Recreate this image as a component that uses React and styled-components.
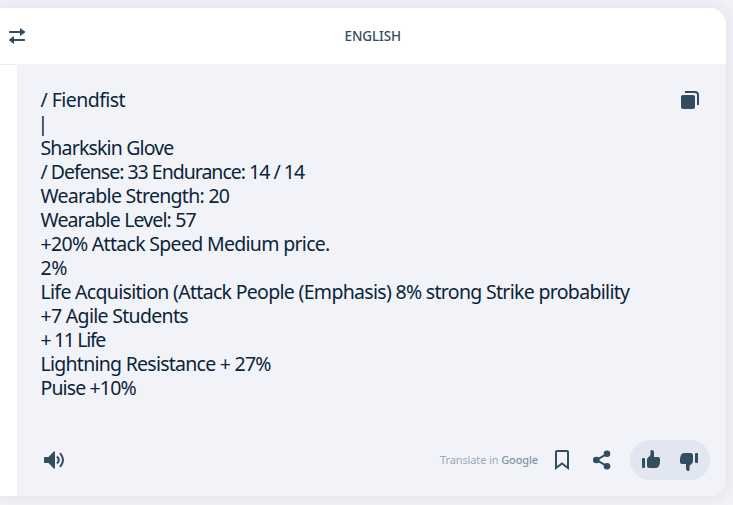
import React from "react";
import styled, { createGlobalStyle } from "styled-components";

const GlobalStyle = createGlobalStyle`
    * {
        box-sizing: border-box;
    }
    body {
        margin: 0;
        overflow: hidden;
        background: #f3f4f9;
        font-family: "Noto Sans", "Open Sans", sans-serif;
    }
`;

const Page = styled.div`
    width: 733px;
    height: 505px;
    padding: 8px 7px 9px 0;
    overflow: hidden;
`;

const Card = styled.div`
    height: 488px;
    display: flex;
    flex-direction: column;
    background: #fff;
    border-radius: 0 16px 16px 0;
    box-shadow: 0 0 20px rgba(30, 30, 40, 0.1);
`;

const Head = styled.header`
    height: 56px;
    flex: none;
    display: flex;
    align-items: center;
`;

const IconButton = styled.button`
    display: flex;
    padding: 0;
    border: 0;
    background: none;
    color: #314e60;
    svg {
        display: block;
    }
`;

const SwapButton = styled(IconButton)`
    width: 17px;
    margin-left: 9px;
`;

const Language = styled.div`
    flex: 1;
    padding-left: 318.5px;
    color: #314e60;
    font-size: 13.5px;
    font-weight: 500;
    line-height: 18px;
    letter-spacing: -0.1px;
`;

const Body = styled.main`
    flex: 1;
    display: flex;
`;

const Source = styled.div`
    width: 17px;
    border-top: 1px solid #e9ebf2;
`;

const Result = styled.section`
    flex: 1;
    display: flex;
    flex-direction: column;
    justify-content: space-between;
    background: #f2f3f9;
    border-radius: 0 0 16px 0;
`;

const Translation = styled.div`
    display: flex;
    justify-content: space-between;
    padding: 24px 27px 0 23.5px;
`;

const Lines = styled.div`
    color: #0b2438;
    font-size: 19.5px;
    line-height: 24px;
`;

const Line = styled.div`
    white-space: pre;
    letter-spacing: ${(props) => props.$tracking}px;
    text-indent: ${(props) => props.$indent || 0}px;
`;

const CopyButton = styled(IconButton)`
    height: 18px;
    margin-top: 3px;
`;

const Foot = styled.footer`
    display: flex;
    align-items: center;
    height: 40px;
    margin: 0 16px 16px 27px;
`;

const Credit = styled.div`
    margin-left: auto;
    color: #9ba9b8;
    font-size: 11px;
    line-height: 16px;
    letter-spacing: -0.12px;
    white-space: nowrap;
    span {
        color: #8493a4;
        font-weight: 500;
    }
`;

const SaveButton = styled(IconButton)`
    margin-left: 17px;
`;

const ShareButton = styled(IconButton)`
    margin-left: 24px;
`;

const Rating = styled.div`
    display: flex;
    align-items: flex-start;
    justify-content: space-between;
    width: 80px;
    height: 40px;
    margin-left: 19px;
    padding: 10px 12px 0;
    border-radius: 20px;
    background: #e1e6f1;
`;

const DislikeButton = styled(IconButton)`
    margin-top: 3px;
`;

const lines = [
    { text: "/ Fiendfist", tracking: -0.55 },
    { text: "|", tracking: 0, indent: -3 },
    { text: "Sharkskin Glove", tracking: -0.84 },
    { text: "/ Defense: 33 Endurance: 14 / 14", tracking: -1 },
    { text: "Wearable Strength: 20", tracking: -0.7 },
    { text: "Wearable Level: 57", tracking: -0.86 },
    { text: "+20% Attack Speed Medium price.", tracking: -0.69 },
    { text: "2%", tracking: -0.5 },
    { text: "Life Acquisition (Attack People (Emphasis) 8% strong Strike probability", tracking: -0.69 },
    { text: "+7 Agile Students", tracking: -0.69 },
    { text: "+ 11 Life", tracking: -1.35 },
    { text: "Lightning Resistance + 27%", tracking: -0.74 },
    { text: "Puise +10%", tracking: -0.87 },
];

const SwapIcon = () => (
    <svg width="17" height="16" viewBox="0 0 17 16" fill="currentColor">
        <path d="M.5 3H11V.8q0-1 .8-.4L16 3.500q.6.500 0 1L11.800 7.600Q11 8.200 11 7.200V5H.5Q0 5 0 4t.5-1zM15.500 11H5V8.800q0-1-.8-.4L.3 11.500q-.6.500 0 1L4.200 15.600Q5 16.200 5 15.200V13h10.500q.5 0 .5-1t-.5-1z" />
    </svg>
);

const CopyIcon = () => (
    <svg width="18" height="18" viewBox="0 0 18 18">
        <rect x="0" y="4" width="14" height="14" rx="2" fill="currentColor" />
        <path d="M4 1h10a3 3 0 0 1 3 3v10" fill="none" stroke="currentColor" strokeWidth="2" />
    </svg>
);

const SpeakerIcon = () => (
    <svg width="21" height="18" viewBox="0 0 21 18">
        <path d="M1 6h3.500L9.500.8Q11-.5 11 1v16q0 1.500-1.500.2L4.500 12H1q-1 0-1-1V7q0-1 1-1z" fill="currentColor" />
        <path d="M13 5.500q3.500 3.500 0 7M16 2.200q6 6.800 0 13.600" fill="none" stroke="currentColor" strokeWidth="2" />
    </svg>
);

const BookmarkIcon = () => (
    <svg width="14" height="20" viewBox="0 0 14 20" fill="none" stroke="currentColor" strokeWidth="2">
        <path d="M1 18V2q0-1 1-1h10q1 0 1 1v16l-6-4.500z" />
    </svg>
);

const ShareIcon = () => (
    <svg width="18" height="20" viewBox="0 0 18 20" fill="currentColor">
        <path d="M14 3.800L3.500 10 14 16.200" fill="none" stroke="currentColor" strokeWidth="2" />
        <circle cx="14" cy="3.800" r="3.300" />
        <circle cx="3.300" cy="10" r="3.300" />
        <circle cx="14" cy="16.200" r="3.300" />
    </svg>
);

const ThumbIcon = ({ down }) => (
    <svg width="18" height="18" viewBox="0 0 18 18" fill="currentColor">
        <g transform={down ? "rotate(180 9 9)" : undefined}>
            <rect x="0" y="8" width="3" height="10" rx="1" />
            <path d="M5 10Q5 8.500 6 7.600L7.500 6.300Q8.500 5.500 8.500 4V1.300Q8.500 0 9.800 0 12 0 12 3v4h4q2 0 2 2v2.500q0 2.500-1 4.500-1 2-3 2H7.500Q5 18 5 15.500z" />
        </g>
    </svg>
);

export default function App() {
    return (
        <>
            <GlobalStyle />
            <Page>
                <Card>
                    <Head>
                        <SwapButton aria-label="Swap languages"><SwapIcon /></SwapButton>
                        <Language>ENGLISH</Language>
                    </Head>
                    <Body>
                        <Source />
                        <Result>
                            <Translation>
                                <Lines>
                                    {lines.map((line) => (
                                        <Line key={line.text} $tracking={line.tracking} $indent={line.indent}>{line.text}</Line>
                                    ))}
                                </Lines>
                                <CopyButton aria-label="Copy"><CopyIcon /></CopyButton>
                            </Translation>
                            <Foot>
                                <IconButton aria-label="Listen"><SpeakerIcon /></IconButton>
                                <Credit>Translate in <span>Google</span></Credit>
                                <SaveButton aria-label="Save"><BookmarkIcon /></SaveButton>
                                <ShareButton aria-label="Share"><ShareIcon /></ShareButton>
                                <Rating>
                                    <IconButton aria-label="Good translation"><ThumbIcon /></IconButton>
                                    <DislikeButton aria-label="Bad translation"><ThumbIcon down /></DislikeButton>
                                </Rating>
                            </Foot>
                        </Result>
                    </Body>
                </Card>
            </Page>
        </>
    );
}
